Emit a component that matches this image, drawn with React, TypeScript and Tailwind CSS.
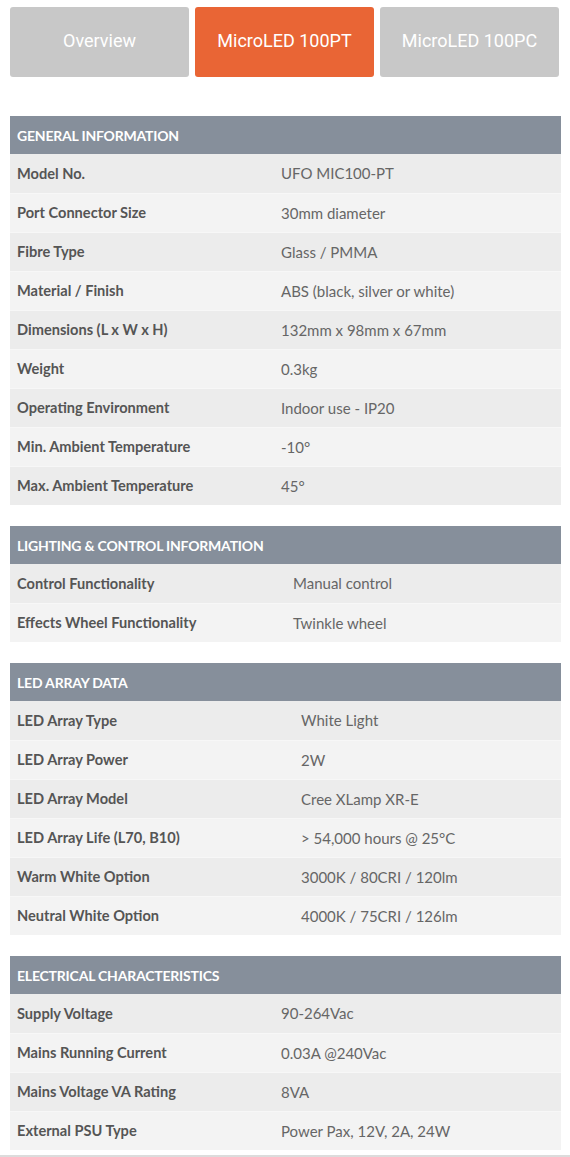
import React from "react";

type Section = { title: string; col: string; rows: [string, string][] };

const sections: Section[] = [
  {
    title: "GENERAL INFORMATION",
    col: "grid-cols-[264px_1fr]",
    rows: [
      ["Model No.", "UFO MIC100-PT"],
      ["Port Connector Size", "30mm diameter"],
      ["Fibre Type", "Glass / PMMA"],
      ["Material / Finish", "ABS (black, silver or white)"],
      ["Dimensions (L x W x H)", "132mm x 98mm x 67mm"],
      ["Weight", "0.3kg"],
      ["Operating Environment", "Indoor use - IP20"],
      ["Min. Ambient Temperature", "-10°"],
      ["Max. Ambient Temperature", "45°"],
    ],
  },
  {
    title: "LIGHTING & CONTROL INFORMATION",
    col: "grid-cols-[276px_1fr]",
    rows: [
      ["Control Functionality", "Manual control"],
      ["Effects Wheel Functionality", "Twinkle wheel"],
    ],
  },
  {
    title: "LED ARRAY DATA",
    col: "grid-cols-[284px_1fr]",
    rows: [
      ["LED Array Type", "White Light"],
      ["LED Array Power", "2W"],
      ["LED Array Model", "Cree XLamp XR-E"],
      ["LED Array Life (L70, B10)", "> 54,000 hours @ 25°C"],
      ["Warm White Option", "3000K / 80CRI / 120lm"],
      ["Neutral White Option", "4000K / 75CRI / 126lm"],
    ],
  },
  {
    title: "ELECTRICAL CHARACTERISTICS",
    col: "grid-cols-[264px_1fr]",
    rows: [
      ["Supply Voltage", "90-264Vac"],
      ["Mains Running Current", "0.03A @240Vac"],
      ["Mains Voltage VA Rating", "8VA"],
      ["External PSU Type", "Power Pax, 12V, 2A, 24W"],
    ],
  },
];

export default function App() {
  return (
    <div className="w-[570px] h-[1157px] bg-white overflow-hidden">
      <div className="flex gap-[6px] pl-[10px] pr-[10px] pt-[7px]">
        <div className="w-[179px] h-[70px] pb-[4px] rounded-[3px] bg-[#c8c8c8] flex items-center justify-center text-white text-[18px] font-['Roboto',sans-serif]">
          Overview
        </div>
        <div className="w-[179px] h-[70px] pb-[4px] rounded-[3px] bg-[#e96535] flex items-center justify-center text-white text-[18px] font-['Roboto',sans-serif]">
          MicroLED 100PT
        </div>
        <div className="w-[179px] h-[70px] pb-[4px] rounded-[3px] bg-[#c8c8c8] flex items-center justify-center text-white text-[18px] font-['Roboto',sans-serif]">
          MicroLED 100PC
        </div>
      </div>
      <div className="flex flex-col gap-[21px] pt-[39px] pl-[10px] w-[561px] font-['Lato',sans-serif]">
        {sections.map((s) => (
          <div key={s.title}>
            <div className="h-[38px] bg-[#868f9b] flex items-center pl-[7px] text-white font-bold text-[14px] tracking-[-0.2px]">
              {s.title}
            </div>
            {s.rows.map(([k, v], i) => (
              <div
                key={k}
                className={`grid ${s.col} h-[39px] items-center ${
                  i % 2 === 0 ? "bg-[#ececec]" : "bg-[#f3f3f3]"
                } ${i > 0 ? "border-t border-[#f7f7f7]" : ""}`}
              >
                <div className="pl-[7px] font-bold text-[#555555] text-[14.6px]">{k}</div>
                <div className="pl-[7px] text-[#666666] text-[15px]">{v}</div>
              </div>
            ))}
          </div>
        ))}
      </div>
      <div className="mt-[5px] h-[2px] bg-[#dcdcdc]" />
    </div>
  );
}
